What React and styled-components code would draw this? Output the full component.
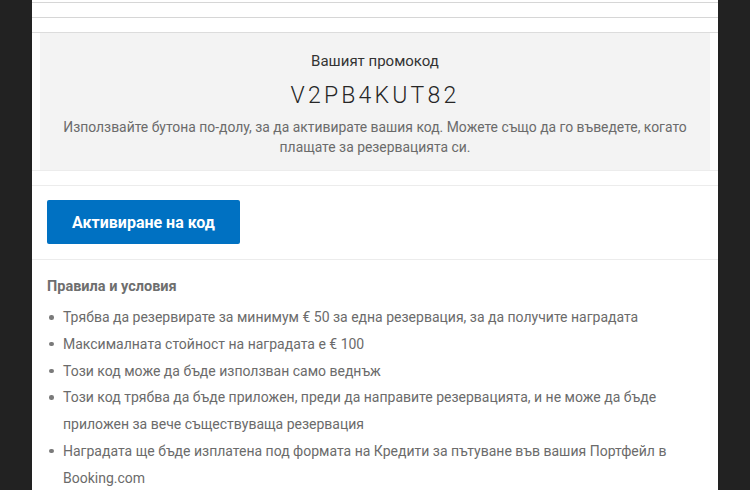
import styled, { createGlobalStyle } from "styled-components";

const Global = createGlobalStyle`
	html, body {
		margin: 0;
		padding: 0;
		background: #222222;
	}
	body {
		font-family: Roboto, "Liberation Sans", sans-serif;
		-webkit-font-smoothing: antialiased;
	}
`;

const Page = styled.main`
	width: 750px;
	height: 490px;
	overflow: hidden;
	background: #222222;
`;

const Panel = styled.section`
	width: 686px;
	height: 490px;
	margin-left: 32px;
	padding-top: 2px;
	box-sizing: border-box;
	background: #fff;
	overflow: hidden;
`;

const Divider = styled.div`
	height: ${(p) => p.$gap || 0}px;
	border-top: 1px solid ${(p) => p.$color || "#ececec"};
	box-sizing: content-box;
`;

const PromoBox = styled.div`
	margin: 0 8px;
	height: 137px;
	background: #f3f3f3;
	display: flex;
	flex-direction: column;
	align-items: center;
	text-align: center;
	padding-top: 19px;
	box-sizing: border-box;
`;

const PromoLabel = styled.div`
	font-size: 15px;
	color: #333;
	line-height: 18px;
`;

const PromoCode = styled.div`
	margin-top: 12px;
	font-size: 23px;
	font-weight: 300;
	letter-spacing: 3.2px;
	color: #262626;
	line-height: 28px;
`;

const PromoHint = styled.p`
	margin: 8px 0 0;
	padding: 0 16px;
	font-size: 13.9px;
	line-height: 19.5px;
	color: #6b6b6b;
`;

const ButtonRow = styled.div`
	padding: 14px 15px 15px;
`;

const Button = styled.button`
	display: block;
	width: 193px;
	height: 44px;
	border: none;
	border-radius: 2px;
	background: #0071c2;
	color: #fff;
	font-family: Roboto, "Liberation Sans", sans-serif;
	font-size: 16px;
	font-weight: 700;
	cursor: pointer;
`;

const Rules = styled.div`
	padding: 18px 15px 0;
`;

const RulesTitle = styled.h3`
	margin: 0;
	font-size: 14.5px;
	font-weight: 700;
	color: #6e6e6e;
	line-height: 18px;
`;

const List = styled.ul`
	margin: 8px 0 0;
	padding: 0;
	list-style: none;
`;

const Item = styled.li`
	position: relative;
	padding-left: 16px;
	font-size: 14px;
	line-height: 26.8px;
	color: #6b6b6b;

	&::before {
		content: "";
		position: absolute;
		left: 2px;
		top: 11px;
		width: 4.5px;
		height: 4.5px;
		border-radius: 50%;
		background: #7a7a7a;
	}
`;

const rules = [
	"Трябва да резервирате за минимум € 50 за една резервация, за да получите наградата",
	"Максималната стойност на наградата е € 100",
	"Този код може да бъде използван само веднъж",
	"Този код трябва да бъде приложен, преди да направите резервацията, и не може да бъде приложен за вече съществуваща резервация",
	"Наградата ще бъде изплатена под формата на Кредити за пътуване във вашия Портфейл в Booking.com",
];

export default function App() {
	return (
		<Page>
			<Global />
			<Panel>
				<Divider $gap={14} $color="#d6d6d6" />
				<Divider $gap={14} $color="#d6d6d6" />
				<Divider $color="#dcdcdc" />
				<PromoBox>
					<PromoLabel>Вашият промокод</PromoLabel>
					<PromoCode>V2PB4KUT82</PromoCode>
					<PromoHint>
						Използвайте бутона по-долу, за да активирате вашия код. Можете също да го
						въведете, когато плащате за резервацията си.
					</PromoHint>
				</PromoBox>
				<Divider $gap={14} />
				<Divider />
				<ButtonRow>
					<Button>Активиране на код</Button>
				</ButtonRow>
				<Divider />
				<Rules>
					<RulesTitle>Правила и условия</RulesTitle>
					<List>
						{rules.map((r) => (
							<Item key={r}>{r}</Item>
						))}
					</List>
				</Rules>
			</Panel>
		</Page>
	);
}
